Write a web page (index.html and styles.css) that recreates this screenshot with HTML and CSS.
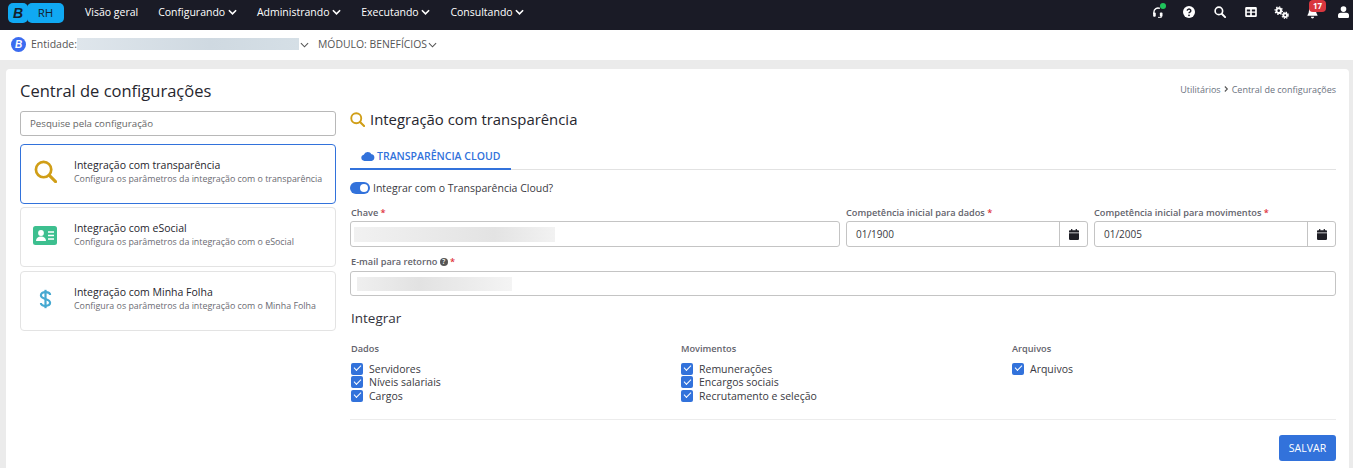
FILE: index.html
```html
<!DOCTYPE html>
<html lang="pt-BR">
<head>
    <meta charset="UTF-8">
    <meta name="viewport" content="width=device-width, initial-scale=1.0">
    <title>Central de configurações</title>
    <link rel="stylesheet" href="styles.css">
</head>
<body>
    <header class="topbar">
        <div class="logo"><span class="logo-b">B</span><span class="logo-rh">RH</span></div>
        <nav class="menu">
            <a class="menu-item">Visão geral</a>
            <a class="menu-item">Configurando <svg class="chev" viewBox="0 0 10 6"><path d="M1 1l4 4 4-4"/></svg></a>
            <a class="menu-item">Administrando <svg class="chev" viewBox="0 0 10 6"><path d="M1 1l4 4 4-4"/></svg></a>
            <a class="menu-item">Executando <svg class="chev" viewBox="0 0 10 6"><path d="M1 1l4 4 4-4"/></svg></a>
            <a class="menu-item">Consultando <svg class="chev" viewBox="0 0 10 6"><path d="M1 1l4 4 4-4"/></svg></a>
        </nav>
        <div class="tools">
            <span class="tool">
                <svg viewBox="0 0 16 16" width="12" height="13"><path d="M2.500 10V7.500a5.500 5.500 0 0 1 8-4.900" fill="none" stroke="#fff" stroke-width="1.800"/><rect x="1.500" y="8" width="3.500" height="5.500" rx="1.200" fill="#fff"/><rect x="10.500" y="8" width="3.500" height="5.500" rx="1.200" fill="#fff"/><path d="M12.500 13v1.500H8" fill="none" stroke="#fff" stroke-width="1.200"/></svg>
                <i class="online"></i>
            </span>
            <span class="tool">
                <svg viewBox="0 0 16 16" width="12" height="12"><circle cx="8" cy="8" r="8" fill="#fff"/><path d="M5.600 6.200a2.400 2.200 0 1 1 3.600 2c-.8.500-1.200.8-1.200 1.600" fill="none" stroke="#1a1b26" stroke-width="1.900"/><circle cx="8" cy="12.400" r="1.200" fill="#1a1b26"/></svg>
            </span>
            <span class="tool">
                <svg viewBox="0 0 16 16" width="12" height="12"><circle cx="6.500" cy="6.500" r="5" fill="none" stroke="#fff" stroke-width="2.200"/><path d="M10.300 10.300l4.500 4.500" stroke="#fff" stroke-width="2.600" stroke-linecap="round"/></svg>
            </span>
            <span class="tool">
                <svg viewBox="0 0 14 12" width="12" height="10"><path fill="#fff" fill-rule="evenodd" d="M1.500 0h11A1.500 1.500 0 0 1 14 1.500v9a1.500 1.500 0 0 1-1.500 1.500h-11A1.500 1.500 0 0 1 0 10.500v-9A1.500 1.500 0 0 1 1.500 0zM2 3v2.500h4V3zm6 0v2.500h4V3zM2 7v3h4V7zm6 0v3h4V7z"/></svg>
            </span>
            <span class="tool">
                <svg viewBox="0 0 16 14" width="15" height="13"><g fill="none" stroke="#fff"><circle cx="5" cy="5" r="2.500" stroke-width="2.200"/><circle cx="12" cy="10" r="2" stroke-width="2"/><circle cx="5" cy="5" r="4" stroke-width="1.300" stroke-dasharray="1.500 1.600"/><circle cx="12" cy="10" r="3.400" stroke-width="1.200" stroke-dasharray="1.400 1.300"/></g></svg>
            </span>
            <span class="tool">
                <svg viewBox="0 0 14 16" width="11" height="13"><path fill="#fff" d="M7 1a4.500 4.500 0 0 1 4.500 4.500c0 4 1.800 5 2 6.500H.5c.2-1.500 2-2.500 2-6.500A4.500 4.500 0 0 1 7 1z"/><path fill="#fff" d="M5 13.500h4a2 2 0 0 1-4 0z"/></svg>
                <b class="badge">17</b>
            </span>
            <span class="tool">
                <svg viewBox="0 0 14 15" width="11" height="12"><circle cx="7" cy="3.800" r="3.600" fill="#fff"/><path fill="#fff" d="M3.500 8.500h7A3.500 3.500 0 0 1 14 12v1.500a1.500 1.500 0 0 1-1.500 1.500h-11A1.500 1.500 0 0 1 0 13.500V12a3.500 3.500 0 0 1 3.500-3.500z"/></svg>
            </span>
        </div>
    </header>

    <div class="subbar">
        <span class="entity-logo">B</span>
        <span class="entity-label">Entidade:</span>
        <span class="redacted redacted-entity"></span>
        <svg class="chev chev-dark" viewBox="0 0 10 6"><path d="M1 1l4 4 4-4"/></svg>
        <span class="module-label">MÓDULO: BENEFÍCIOS</span>
        <svg class="chev chev-dark" viewBox="0 0 10 6"><path d="M1 1l4 4 4-4"/></svg>
    </div>

    <main class="page">
        <div class="page-head">
            <h1>Central de configurações</h1>
            <div class="crumbs">
                <span>Utilitários</span>
                <svg class="crumb-sep" viewBox="0 0 6 8"><path d="M1 1l3 3-3 3"/></svg>
                <span>Central de configurações</span>
            </div>
        </div>

        <div class="columns">
            <aside class="sidebar">
                <div class="search">Pesquise pela configuração</div>

                <div class="config-card active">
                    <div class="config-icon">
                        <svg viewBox="0 0 24 24" width="23" height="23"><circle cx="10" cy="10" r="8" fill="none" stroke="#d09e17" stroke-width="2.800"/><path d="M16 16l6.500 6.500" stroke="#d09e17" stroke-width="3.200" stroke-linecap="round"/></svg>
                    </div>
                    <div>
                        <div class="config-title">Integração com transparência</div>
                        <div class="config-desc">Configura os parâmetros da integração com o transparência</div>
                    </div>
                </div>

                <div class="config-card">
                    <div class="config-icon">
                        <svg viewBox="0 0 24 19" width="24" height="19"><rect width="24" height="19" rx="2.500" fill="#3dbf8f"/><circle cx="8" cy="7" r="2.900" fill="#fff"/><path fill="#fff" d="M3 15c0-3 2-4.500 5-4.500s5 1.500 5 4.500z"/><path d="M15 6h6M15 9.500h6M15 13h6" stroke="#fff" stroke-width="1.500"/></svg>
                    </div>
                    <div>
                        <div class="config-title">Integração com eSocial</div>
                        <div class="config-desc">Configura os parâmetros da integração com o eSocial</div>
                    </div>
                </div>

                <div class="config-card">
                    <div class="config-icon">
                        <svg viewBox="0 0 14 24" width="13" height="22"><path d="M12 7.500C12 5.500 10 4.500 7 4.500S2 5.800 2 8c0 5 10 3 10 8.200 0 2.200-2 3.300-5 3.300s-5-1.200-5-3.200" fill="none" stroke="#46a9d1" stroke-width="2.400"/><path d="M7 2v20" stroke="#46a9d1" stroke-width="2.400"/></svg>
                    </div>
                    <div>
                        <div class="config-title">Integração com Minha Folha</div>
                        <div class="config-desc">Configura os parâmetros da integração com o Minha Folha</div>
                    </div>
                </div>
            </aside>

            <section class="content">
                <h2 class="content-title">
                    <svg viewBox="0 0 24 24" width="15" height="15"><circle cx="10" cy="10" r="8" fill="none" stroke="#d09e17" stroke-width="3"/><path d="M16 16l6.500 6.500" stroke="#d09e17" stroke-width="3.400" stroke-linecap="round"/></svg>
                    Integração com transparência
                </h2>

                <div class="tabs">
                    <div class="tab">
                        <svg viewBox="0 0 20 14" width="14" height="10"><path fill="#3272db" d="M5 14a4.500 4.500 0 0 1-1-8.900A6 6 0 0 1 15 4.500a4.800 4.800 0 0 1 0 9.500z"/></svg>
                        TRANSPARÊNCIA CLOUD
                    </div>
                </div>

                <div class="toggle-row">
                    <span class="toggle"></span>
                    <span>Integrar com o Transparência Cloud?</span>
                </div>

                <div class="form-row">
                    <div class="field field-key">
                        <label>Chave <em>*</em></label>
                        <div class="input"><span class="redacted redacted-key"></span></div>
                    </div>
                    <div class="field field-date">
                        <label>Competência inicial para dados <em>*</em></label>
                        <div class="input input-date">
                            <span class="date-value">01/1900</span>
                            <span class="date-btn"><svg viewBox="0 0 12 13" width="10" height="11"><path fill="#1d1d24" d="M2.500 0h1.500v1.500h4V0h1.500v1.500H11a1 1 0 0 1 1 1V4H0V2.500a1 1 0 0 1 1-1h1.500zM0 5h12v7a1 1 0 0 1-1 1H1a1 1 0 0 1-1-1z"/></svg></span>
                        </div>
                    </div>
                    <div class="field field-date">
                        <label>Competência inicial para movimentos <em>*</em></label>
                        <div class="input input-date">
                            <span class="date-value">01/2005</span>
                            <span class="date-btn"><svg viewBox="0 0 12 13" width="10" height="11"><path fill="#1d1d24" d="M2.500 0h1.500v1.500h4V0h1.500v1.500H11a1 1 0 0 1 1 1V4H0V2.500a1 1 0 0 1 1-1h1.500zM0 5h12v7a1 1 0 0 1-1 1H1a1 1 0 0 1-1-1z"/></svg></span>
                        </div>
                    </div>
                </div>

                <div class="field field-email">
                    <label>E-mail para retorno <i class="hint">?</i> <em>*</em></label>
                    <div class="input"><span class="redacted redacted-email"></span></div>
                </div>

                <h3 class="group-title">Integrar</h3>

                <div class="checks">
                    <div class="check-col">
                        <div class="check-head">Dados</div>
                        <div class="check"><span class="box"></span>Servidores</div>
                        <div class="check"><span class="box"></span>Níveis salariais</div>
                        <div class="check"><span class="box"></span>Cargos</div>
                    </div>
                    <div class="check-col">
                        <div class="check-head">Movimentos</div>
                        <div class="check"><span class="box"></span>Remunerações</div>
                        <div class="check"><span class="box"></span>Encargos sociais</div>
                        <div class="check"><span class="box"></span>Recrutamento e seleção</div>
                    </div>
                    <div class="check-col">
                        <div class="check-head">Arquivos</div>
                        <div class="check"><span class="box"></span>Arquivos</div>
                    </div>
                </div>

                <div class="actions">
                    <button class="btn-save">SALVAR</button>
                </div>
            </section>
        </div>
    </main>
</body>
</html>
```

FILE: styles.css
```css
html, body {
    height: 468px;
    overflow: hidden;
}

body {
    font-family: "Open Sans", sans-serif;
    margin: 0;
    padding: 0;
    background-color: #ebebeb;
    color: #2b2b33;
    font-size: 10.500px;
}

/* barra superior */
.topbar {
    display: flex;
    align-items: center;
    height: 30px;
    padding: 0 0 0 8px;
    background-color: #1a1b26;
    color: #fff;
}

.logo {
    display: flex;
    height: 20px;
    margin-top: -4px;
}

.logo-b {
    width: 20px;
    background-color: #10a9f3;
    border-radius: 5px;
    color: #14202c;
    font: italic bold 14px/20px "Liberation Sans", sans-serif;
    text-align: center;
}

.logo-rh {
    width: 37px;
    margin-left: -1px;
    background-color: #10a9f3;
    border-radius: 5px;
    color: #14202c;
    font-size: 11.500px;
    line-height: 20px;
    text-align: center;
}

.menu {
    display: flex;
    gap: 20px;
    margin-left: 21px;
    margin-top: -6.500px;
}

.menu-item {
    font-size: 10.500px;
    white-space: nowrap;
}

.chev {
    width: 9px;
    height: 6px;
    fill: none;
    stroke: #fff;
    stroke-width: 1.800;
    vertical-align: 1px;
}

.chev-dark {
    stroke: #555;
    stroke-width: 1.200;
}

.tools {
    display: flex;
    align-items: center;
    margin-left: auto;
    margin-top: -6px;
    margin-right: -6px;
}

.tool {
    position: relative;
    display: flex;
    justify-content: center;
    width: 31px;
}

.online {
    position: absolute;
    top: -3px;
    left: 18px;
    width: 6px;
    height: 6px;
    background-color: #1fc45b;
    border-radius: 50%;
}

.badge {
    position: absolute;
    top: -6px;
    left: 12px;
    width: 17px;
    height: 12px;
    background-color: #d9373f;
    border-radius: 4px;
    font-size: 8px;
    line-height: 12px;
    text-align: center;
}

/* entidade e modulo */
.subbar {
    display: flex;
    align-items: center;
    box-sizing: border-box;
    height: 30px;
    padding: 0 0 2px 11px;
    background-color: #fff;
    color: #555;
}

.entity-logo {
    width: 15px;
    height: 15px;
    margin-right: 5px;
    background-color: #3b6cf0;
    border-radius: 50%;
    color: #fff;
    font: italic bold 10px/15px "Liberation Sans", sans-serif;
    text-align: center;
}

.entity-label {
    width: 46px;
}

.redacted {
    display: block;
}

.redacted-entity {
    width: 222px;
    height: 12px;
    background: linear-gradient(90deg, #dfe6ec, #cfd9e1 60%, #d5dfe6);
}

.subbar .chev {
    margin: 1px 0 0 1px;
}

.module-label {
    margin-left: 9px;
    font-size: 10.400px;
}

/* cartao principal */
.page {
    height: 399px;
    margin: 9px 4px 0 6px;
    padding: 0 13px 0 14px;
    background-color: #fff;
    border-radius: 4px 4px 0 0;
}

.page-head {
    display: flex;
    justify-content: space-between;
    align-items: center;
    height: 42px;
}

.page-head h1 {
    margin: 0;
    font-size: 16.500px;
    font-weight: 400;
    color: #26262e;
}

.crumbs {
    display: flex;
    align-items: center;
    gap: 3px;
    margin-top: -2px;
    font-size: 9px;
    color: #6b7280;
}

.crumb-sep {
    width: 5px;
    height: 8px;
    fill: none;
    stroke: #555;
    stroke-width: 1.300;
}

.columns {
    display: grid;
    grid-template-columns: 316px 986px;
    gap: 14px;
}

/* coluna de configuracoes */
.sidebar {
    display: flex;
    flex-direction: column;
    gap: 3.400px;
}

.search {
    height: 23px;
    margin-bottom: 4.600px;
    padding-left: 9px;
    border: 1px solid #b8b8b8;
    border-radius: 3px;
    font-size: 9.700px;
    line-height: 23px;
    color: #666;
}

.config-card {
    display: flex;
    gap: 5px;
    height: 58px;
    border: 1px solid #e3e3e3;
    border-radius: 4px;
}

.config-card.active {
    border-color: #3272db;
}

.config-icon {
    display: flex;
    flex: none;
    justify-content: center;
    align-items: center;
    width: 48px;
    height: 54px;
}

.config-title {
    margin-top: 13px;
    font-size: 10.500px;
    line-height: 15px;
    color: #26262e;
}

.config-desc {
    font-size: 8.850px;
    line-height: 13px;
    white-space: nowrap;
    color: #6b6b73;
}

/* conteudo */
.content-title {
    display: flex;
    align-items: center;
    gap: 5px;
    height: 16px;
    margin: 0;
    font-size: 14.900px;
    font-weight: 400;
    color: #26262e;
}

.tabs {
    height: 30px;
    margin-top: 12px;
    border-bottom: 1px solid #e2e2e2;
}

.tab {
    display: flex;
    align-items: center;
    gap: 2px;
    width: 161px;
    height: 31px;
    padding: 4px 0 0 11px;
    box-sizing: border-box;
    border-bottom: 2px solid #3272db;
    font-size: 10.500px;
    font-weight: 600;
    color: #3272db;
}

.toggle-row {
    display: flex;
    align-items: center;
    gap: 3px;
    height: 16px;
    margin-top: 10px;
    font-size: 10.500px;
    color: #3a3a42;
}

.toggle {
    position: relative;
    width: 20px;
    height: 12px;
    background-color: #3272db;
    border-radius: 6px;
}

.toggle::after {
    content: "";
    position: absolute;
    top: 2px;
    right: 2px;
    width: 8px;
    height: 8px;
    background-color: #fff;
    border-radius: 50%;
}

.form-row {
    display: flex;
    gap: 6px;
    margin-top: 10px;
}

.field label {
    display: block;
    height: 15px;
    padding-left: 1px;
    font-size: 9.200px;
    font-weight: 600;
    line-height: 14px;
    color: #63636c;
}

.field-date label {
    padding-left: 0;
}

.field em {
    font-style: normal;
    color: #e0323c;
}

.field-key {
    width: 490px;
}

.field-date {
    width: 242px;
}

.input {
    display: flex;
    align-items: center;
    height: 24px;
    border: 1px solid #c4c4c4;
    border-radius: 3px;
}

.redacted-key {
    width: 201px;
    height: 15px;
    margin-left: 3px;
    background: linear-gradient(90deg, #f1f1f1, #e3e3e3 70%, #f2f2f2);
}

.redacted-email {
    width: 155px;
    height: 14px;
    margin-left: 6px;
    background: linear-gradient(90deg, #efefef, #e2e2e2 40%, #f4f4f4);
}

.date-value {
    flex: 1;
    padding-left: 9px;
    font-size: 10px;
    color: #3a3a42;
}

.date-btn {
    display: flex;
    justify-content: center;
    align-items: center;
    width: 27px;
    height: 24px;
    border-left: 1px solid #c4c4c4;
}

.field-email {
    margin-top: 8px;
}

.field-email label {
    height: 16px;
}

.field-email .input {
    height: 23px;
}

.hint {
    display: inline-block;
    width: 8px;
    height: 8px;
    background-color: #555;
    border-radius: 50%;
    color: #fff;
    font-size: 6.500px;
    font-style: normal;
    line-height: 8px;
    text-align: center;
    vertical-align: 1px;
}

.group-title {
    margin: 13px 0 0;
    padding-left: 1px;
    font-size: 13.500px;
    font-weight: 400;
    line-height: 18px;
    color: #33333b;
}

.checks {
    display: grid;
    grid-template-columns: 330px 331px 1fr;
    margin-top: 15px;
    padding: 0 0 16px 1px;
    border-bottom: 1px solid #ececec;
}

.check-head {
    margin-bottom: 6px;
    font-size: 9.200px;
    font-weight: 600;
    line-height: 14px;
    color: #63636c;
}

.check {
    display: flex;
    align-items: center;
    gap: 6px;
    height: 13.500px;
    font-size: 10.500px;
    color: #3a3a42;
}

.box {
    position: relative;
    width: 12px;
    height: 12px;
    background-color: #3272db;
    border-radius: 2px;
}

.box::after {
    content: "";
    position: absolute;
    top: 2.500px;
    left: 3px;
    width: 6px;
    height: 3px;
    border-left: 1.500px solid #fff;
    border-bottom: 1.500px solid #fff;
    transform: rotate(-45deg);
}

.actions {
    display: flex;
    justify-content: flex-end;
    margin-top: 15px;
}

.btn-save {
    width: 57px;
    height: 26px;
    padding: 0;
    border: none;
    border-radius: 3px;
    background-color: #3272db;
    color: #fff;
    font-family: inherit;
    font-size: 10.500px;
}
```
